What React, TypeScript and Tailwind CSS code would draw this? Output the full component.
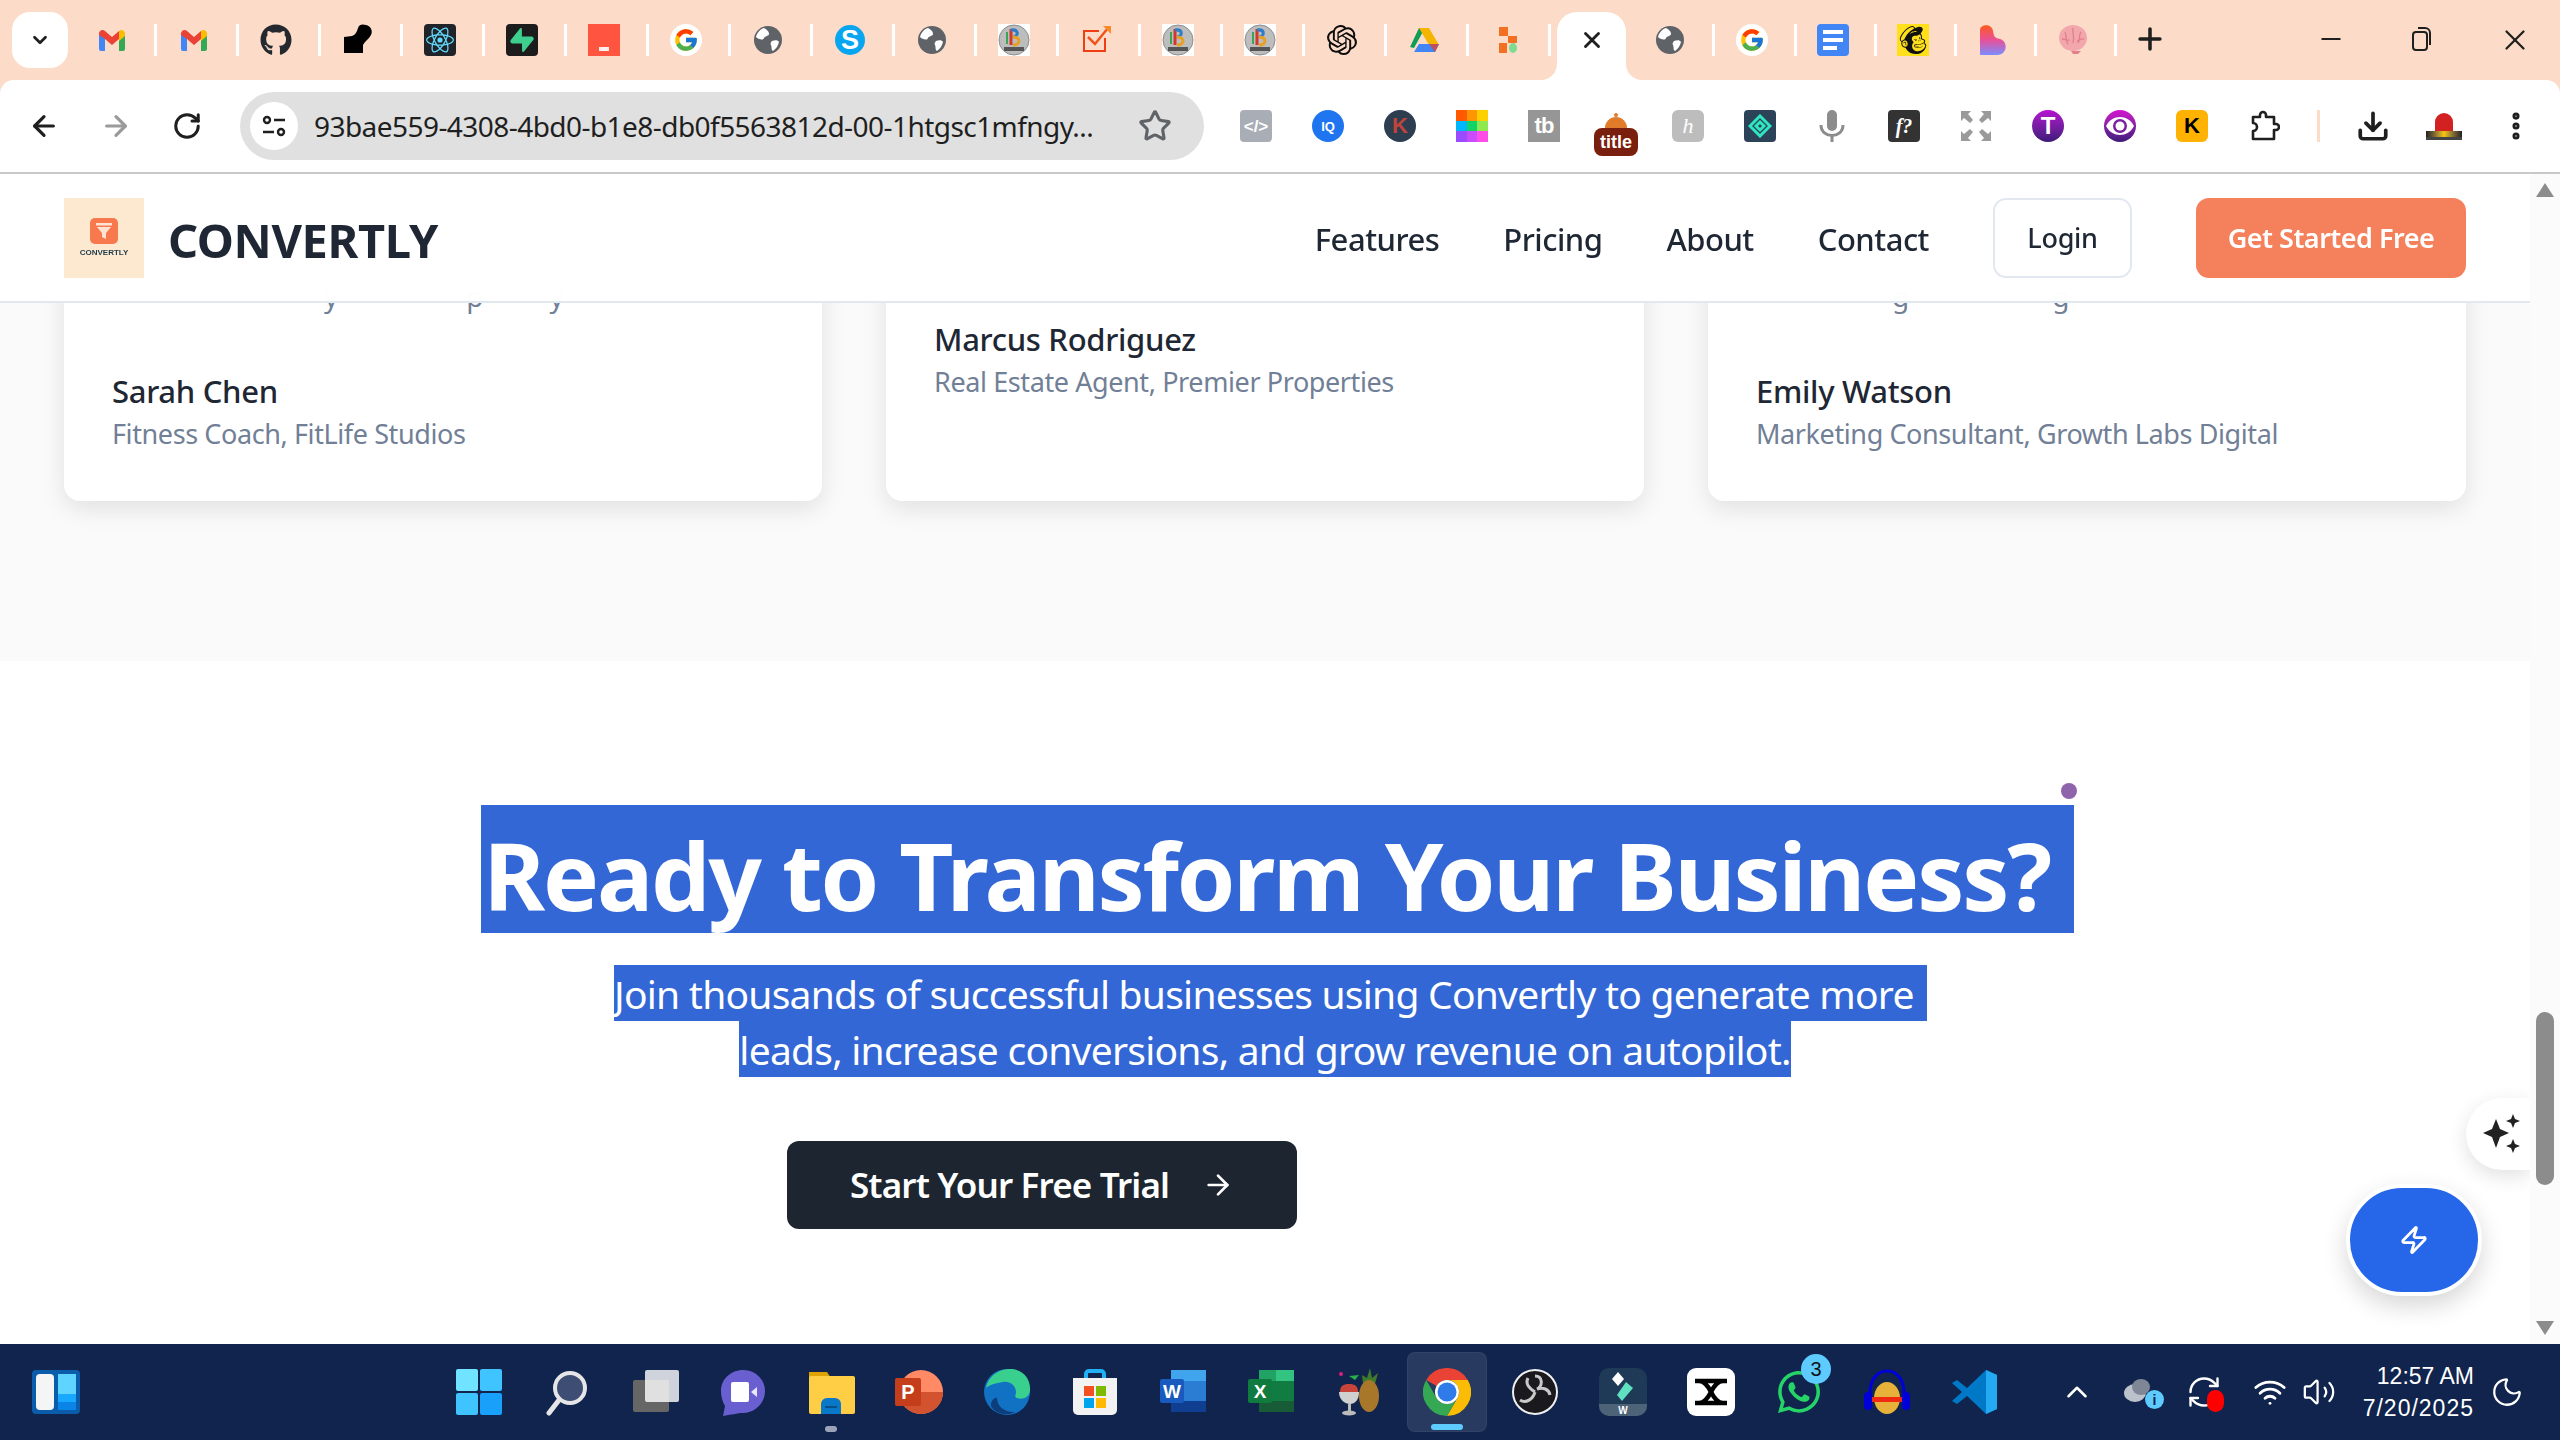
import type { ReactNode } from 'react';
import { ArrowLeft, ArrowRight, RotateCw, RefreshCw, Star, Download, MoreVertical, Plus, Minus, X, ChevronDown, ChevronUp, Zap, Wifi, Volume2, Moon } from 'lucide-react';
import { FaGithub, FaWhatsapp } from 'react-icons/fa';
import { FcGoogle } from 'react-icons/fc';
import { SiReact, SiSupabase, SiOpenai, SiMailchimp } from 'react-icons/si';

function Svg({ children, size = 32 }: { children: ReactNode; size?: number }) {
  return (
    <svg width={size} height={size} viewBox="0 0 32 32">
      {children}
    </svg>
  );
}

const Gmail = () => (
  <Svg>
    <path fill="#4285f4" d="M3 9h6v18H5a2 2 0 0 1-2-2z" />
    <path fill="#34a853" d="M23 9h6v16a2 2 0 0 1-2 2h-4z" />
    <path fill="#ea4335" d="M3 10c0-4 4-5 6-3l7 6 7-6v8l-7 6-7-6-6-4z" />
    <path fill="#fbbc04" d="M23 7c2-2 6-1 6 3v2l-6 5z" />
  </Svg>
);
const GoogleG = () => (
  <div className="w-8 h-8 rounded-full bg-white flex items-center justify-center">
    <FcGoogle size={26} />
  </div>
);
const Globe = () => (
  <Svg>
    <circle cx="16" cy="16" r="14" fill="#5f6368" />
    <path fill="#fff" d="M12 4c3 2 5 3 5 6 0 2-4 2-5 4-1 3-6 1-8-1 1-4 4-8 8-9zM20 17c3-1 6-1 7 1-1 4-3 7-6 9-2-1-1-4-2-6-1-1 0-3 1-4z" />
  </Svg>
);
const BadgeB = () => (
  <div className="w-8 h-8 bg-white flex items-center justify-center">
    <svg width="32" height="32" viewBox="0 0 32 32">
      <circle cx="16" cy="16" r="15" fill="#bdbdbd" stroke="#8d8d8d" />
      <path fill="none" stroke="#d4372c" strokeWidth="3" d="M13 5v16" />
      <path fill="none" stroke="#2d7dc9" strokeWidth="3" d="M13 6c8-1 8 6 2 7" />
      <path fill="none" stroke="#e8a020" strokeWidth="3" d="M15 13c8 0 8 8 0 8" />
      <path fill="none" stroke="#3aa655" strokeWidth="2" d="M9 8v12" />
      <rect x="6" y="23" width="20" height="4" fill="#555" />
    </svg>
  </div>
);

const Skype = () => (
  <Svg>
    <circle cx="16" cy="16" r="15" fill="#08a6f0" />
    <text x="16" y="25" textAnchor="middle" fontSize="27" fontWeight="700" fill="#fff" fontFamily="Liberation Sans">S</text>
  </Svg>
);
const Tick = () => (
  <Svg>
    <path fill="none" stroke="#ef3e12" strokeWidth="2" d="M25 14v13H4V7h15" />
    <path fill="none" stroke="#f2521c" strokeWidth="2.5" d="M8 13l7 7L28 4" />
    <path fill="#f98b2a" d="M23 2h8v8z" />
  </Svg>
);
const Drive = () => (
  <Svg>
    <path fill="#0f9d58" d="M11 4h6L6 24l-4-1z" />
    <path fill="#f4b400" d="M11 4h10l10 17H21z" />
    <path fill="#4285f4" d="M6 28l5-8h20l-4 8z" />
    <path fill="#db4437" d="M27 28l-6-8h10z" opacity="0.8" />
  </Svg>
);

const tabIcons: ReactNode[] = [
  <Gmail />,
  <Gmail />,
  <FaGithub size={32} color="#24292f" />,
  <Svg>
    <path d="M2 13l8-1c3-1 5-4 6-8 1-4 5-4 8-3 5 1 7 6 5 10-2 4-6 6-8 10v8H2z" />
  </Svg>,
  <div className="w-8 h-8 rounded bg-[#20232a] flex items-center justify-center"><SiReact size={28} color="#61dafb" /></div>,
  <div className="w-8 h-8 rounded bg-[#1c1c1c] flex items-center justify-center"><SiSupabase size={24} color="#3ecf8e" /></div>,
  <div className="w-8 h-8 bg-[#ff5540] flex items-end justify-center pb-[5px]"><div className="w-[10px] h-[4px] bg-white/90" /></div>,
  <GoogleG />,
  <Globe />,
  <Skype />,
  <Globe />,
  <BadgeB />,
  <Tick />,
  <BadgeB />,
  <BadgeB />,
  <SiOpenai size={30} color="#0d0d0d" />,
  <Drive />,
  <Svg>
    <rect x="9" y="3" width="9" height="9" fill="#f36f21" />
    <rect x="18" y="12" width="9" height="7" fill="#f36f21" />
    <rect x="9" y="19" width="8" height="10" fill="#f36f21" />
    <ellipse cx="23" cy="24" rx="4" ry="5" fill="#7ddc8f" />
  </Svg>,
];

const Docs = () => (
  <div className="w-8 h-8 rounded bg-[#4285f4] flex flex-col justify-center gap-[4px] px-[6px]">
    <div className="h-[4px] bg-white" />
    <div className="h-[4px] bg-white" />
    <div className="h-[4px] w-[14px] bg-white" />
  </div>
);
const Bubble = () => (
  <svg width="32" height="32" viewBox="0 0 32 32">
    <defs>
      <linearGradient id="bubble" x1="0" y1="0" x2="0" y2="1">
        <stop offset="0" stopColor="#ff5a1f" />
        <stop offset="0.5" stopColor="#e8509a" />
        <stop offset="1" stopColor="#7c8cff" />
      </linearGradient>
    </defs>
    <path fill="url(#bubble)" d="M3 6c0-6 12-7 13 1 1 6 2 7 7 8 8 2 8 16-3 16H3z" />
  </svg>
);
const Brain = () => (
  <Svg>
    <ellipse cx="16" cy="14" rx="14" ry="13" fill="#f2a7ad" />
    <path fill="none" stroke="#e27f8a" strokeWidth="1.3" d="M8 8c2 4 0 8 3 12M16 4c-1 5 2 9 0 15M24 8c-3 4 0 7-3 11M5 15c4 0 6 2 8 1M27 15c-4-1-5 2-7 2" />
    <path fill="#e27f8a" d="M14 27h10l-3 3h-5z" />
  </Svg>
);
const Mailchimp = () => (
  <div className="w-8 h-8 bg-[#ffe01b] flex items-center justify-center"><SiMailchimp size={28} color="#111" /></div>
);

function Tab({ children, w = 'w-[82px]' }: { children: ReactNode; w?: string }) {
  return (
    <div className={`${w} h-8 shrink-0 flex items-center justify-center pr-[6px] border-r-[3px] border-white`}>
      {children}
    </div>
  );
}

function TabStrip() {
  return (
    <div className="h-20 shrink-0 bg-[#fcdcc9] flex items-start pt-3 pl-3 text-[#1f1f1f]">
      <div className="w-14 h-14 rounded-[18px] bg-white flex items-center justify-center mr-[7px]">
        <ChevronDown size={22} strokeWidth={3} />
      </div>
      <div className="flex items-center mt-3">
        {tabIcons.map((icon, i) => (
          <Tab key={i}>{icon}</Tab>
        ))}
      </div>
      <div className="relative w-[69px] h-[68px] ml-[6px] mr-[7px] shrink-0 bg-white rounded-t-[20px] flex items-start pt-[15px] justify-center">
        <svg className="absolute bottom-0 -left-4" width="16" height="16" viewBox="0 0 16 16"><path fill="#fff" d="M16 0v16H0A16 16 0 0 0 16 0z" /></svg>
        <svg className="absolute bottom-0 -right-4" width="16" height="16" viewBox="0 0 16 16"><path fill="#fff" d="M0 0v16h16A16 16 0 0 1 0 0z" /></svg>
        <X size={26} strokeWidth={2.6} />
      </div>
      <div className="flex items-center mt-3">
        <Tab><Globe /></Tab>
        <Tab><GoogleG /></Tab>
        <Tab w="w-[80px]"><Docs /></Tab>
        <Tab w="w-[80px]"><Mailchimp /></Tab>
        <Tab w="w-[80px]"><Bubble /></Tab>
        <Tab w="w-[80px]"><Brain /></Tab>
      </div>
      <div className="ml-[16px] mt-[10px]"><Plus size={34} strokeWidth={2.5} /></div>
      <div className="ml-[149px] mt-[12px]"><Minus size={30} strokeWidth={1.6} /></div>
      <div className="ml-[60px] mt-[12px]">
        <svg width="30" height="32" viewBox="0 0 30 32" fill="none" stroke="#1f1f1f" strokeWidth="2">
          <rect x="7" y="8" width="14" height="18" rx="3" />
          <path d="M12 4h7a5 5 0 0 1 5 5v12" />
        </svg>
      </div>
      <div className="ml-[62px] mt-[11px]"><X size={34} strokeWidth={1.6} /></div>
    </div>
  );
}

const Square = ({ bg, children, round = 'rounded' }: { bg: string; children?: ReactNode; round?: string }) => (
  <div className={`w-8 h-8 ${round} ${bg} flex items-center justify-center text-white font-bold text-[17px] leading-none font-['Liberation_Sans',sans-serif]`}>
    {children}
  </div>
);

const extensions: ReactNode[] = [
  <Square bg="bg-[#a9adb5]" round="rounded-sm">&lt;/&gt;</Square>,
  <Square bg="bg-[#1f75f0]" round="rounded-full"><span className="text-[13px] text-white">IQ</span></Square>,
  <Square bg="bg-[#2c3e50]" round="rounded-full"><span className="text-[#c0443c] text-[22px]">K</span></Square>,
  <div className="w-8 h-8 grid grid-cols-3 grid-rows-3">
    {['bg-[#ff5a00]', 'bg-[#ff9500]', 'bg-[#ffd000]', 'bg-[#00b7ff]', 'bg-[#12d36a]', 'bg-[#8ee84f]', 'bg-[#9a4dff]', 'bg-[#c94dff]', 'bg-[#ff4de8]'].map((c) => (
      <div key={c} className={c} />
    ))}
  </div>,
  <Square bg="bg-[#969696]" round="rounded-none"><span className="text-[22px] tracking-[-1px]">tb</span></Square>,
  <div className="flex flex-col items-center mt-[16px]">
    <svg width="30" height="16" viewBox="0 0 30 16"><circle cx="15" cy="2" r="2" fill="#e07b2a" /><path fill="#e07b2a" d="M4 15a11 11 0 0 1 22 0z" /></svg>
    <div className="w-11 h-7 -mt-[1px] rounded-lg bg-[#7a1f0d] flex items-center justify-center text-white font-bold text-[18px] leading-none font-['Liberation_Sans',sans-serif]">title</div>
  </div>,
  <Square bg="bg-[#bdbdbd]" round="rounded-md"><span className="italic font-normal text-[22px] font-['Liberation_Serif',serif]">h</span></Square>,
  <Square bg="bg-[#2c4258]" round="rounded">
    <svg width="24" height="24" viewBox="0 0 24 24" fill="none" stroke="#2ee6c0" strokeWidth="3"><path d="M12 2l10 10-10 10L2 12zM12 8l4 4-4 4-4-4z" /></svg>
  </Square>,
  <svg width="32" height="32" viewBox="0 0 32 32" fill="none"><rect x="11" y="0" width="10" height="21" rx="5" fill="#8c8c8c" /><path d="M5 15c0 14 22 14 22 0M16 25v7" stroke="#8c8c8c" strokeWidth="3" /></svg>,
  <Square bg="bg-[#333333]" round="rounded"><span className="italic text-[20px] font-['Liberation_Serif',serif]">f?</span></Square>,
  <svg width="32" height="32" viewBox="0 0 32 32" fill="#9a9a9a"><path d="M1 1h10L8 4l5 6-3 3-6-5-3 3zM31 1v10l-3-3-6 5-3-3 5-6-3-3zM1 31V21l3 3 6-5 3 3-5 6 3 3zM31 31H21l3-3-5-6 3-3 6 5 3-3z" /></svg>,
  <Square bg="bg-gradient-to-b from-[#b60fd0] to-[#3f1a7a]" round="rounded-full"><span className="text-[24px]">T</span></Square>,
  <Square bg="bg-gradient-to-b from-[#d40fd0] to-[#3f1a7a]" round="rounded-full">
    <svg width="28" height="20" viewBox="0 0 28 20"><path fill="#fff" d="M0 10c6-12 22-12 28 0-6 12-22 12-28 0z" /><circle cx="14" cy="10" r="7" fill="#7b1fa2" /><circle cx="14" cy="10" r="4.5" fill="#fff" /></svg>
  </Square>,
  <Square bg="bg-[#ffb300]" round="rounded-md"><span className="text-black text-[22px]">K</span></Square>,
  <svg width="32" height="32" viewBox="0 0 32 32" fill="none" stroke="#1f1f1f" strokeWidth="2.6" strokeLinejoin="round"><path d="M5 7h7V5a3 3 0 0 1 6 0v2h8v7h2a3 3 0 0 1 0 6h-2v9H5v-8a4 4 0 0 0 0-8z" /></svg>,
];

function Toolbar() {
  return (
    <div className="h-[94px] shrink-0 bg-[#fcdcc9]">
      <div className="h-[94px] bg-white rounded-t-[14px] border-b-2 border-[#c8c8c8] flex items-center text-[#1f1f1f]">
        <div className="w-[240px] shrink-0 flex items-center pl-[28px] gap-10">
          <ArrowLeft size={32} strokeWidth={2.4} />
          <ArrowRight size={32} strokeWidth={2.4} color="#9a9a9a" />
          <RotateCw size={30} strokeWidth={2.4} />
        </div>
        <div className="w-[964px] h-[68px] shrink-0 rounded-full bg-[#e0e0e0] flex items-center pl-[10px]">
          <div className="w-12 h-12 rounded-full bg-white flex items-center justify-center">
            <svg width="26" height="26" viewBox="0 0 26 26" fill="none" stroke="#1f1f1f" strokeWidth="2.4">
              <circle cx="6" cy="7" r="3" />
              <path d="M13 7h11M2 19h11" />
              <circle cx="20" cy="19" r="3" />
            </svg>
          </div>
          <span className="ml-4 text-[28px] leading-none tracking-[-0.55px] text-[#1f1f1f] whitespace-nowrap">93bae559-4308-4bd0-b1e8-db0f5563812d-00-1htgsc1mfngy...</span>
          <div className="ml-auto mr-8"><Star size={34} strokeWidth={2.2} color="#5f6368" /></div>
        </div>
        <div className="flex items-center ml-[16px]">
          {extensions.map((icon, i) => (
            <div key={i} className="w-[72px] h-8 shrink-0 flex items-center justify-center">{icon}</div>
          ))}
        </div>
        <div className="w-[3px] h-8 bg-[#fcdcc9] ml-[17px] mr-[36px]" />
        <Download size={34} strokeWidth={2.6} />
        <div className="ml-[36px] w-[36px] flex flex-col items-center">
          <div className="w-[18px] h-[18px] rounded-t-full bg-[#d32020]" />
          <div className="w-[36px] h-[6px] bg-gradient-to-r from-[#222] via-[#f7c600] to-[#222]" />
          <div className="w-[36px] h-[3px] bg-[#444]" />
        </div>
        <div className="ml-[37px]"><MoreVertical size={34} strokeWidth={3} /></div>
      </div>
    </div>
  );
}

function Logo() {
  return (
    <div className="w-20 h-20 bg-[#fde9cf] flex flex-col items-center pt-5">
      <div className="w-7 h-[26px] rounded-[5px] bg-[#f9794f] flex items-center justify-center">
        <svg width="18" height="18" viewBox="0 0 18 18" fill="#fde4d2"><rect x="1" y="1" width="16" height="2.5" /><path d="M2 5h14l-5 6v6l-4-2v-4z" /></svg>
      </div>
      <span className="mt-[3px] text-[8px] leading-[12px] font-bold text-[#1f3a4a] font-['Liberation_Sans',sans-serif]">CONVERTLY</span>
    </div>
  );
}

function Nav() {
  return (
    <nav className="relative z-10 h-[129px] shrink-0 bg-white/95 backdrop-blur-md border-b-2 border-[#e2e8f0] flex items-center pl-16 pr-16 text-[#1e2733]">
      <Logo />
      <span className="ml-[24px] pt-[5px] text-[47px] leading-none font-bold tracking-[-0.4px]">CONVERTLY</span>
      <div className="ml-auto pt-[3px] flex items-center gap-[64px] text-[31px] font-medium tracking-[-0.5px]">
        <span>Features</span>
        <span>Pricing</span>
        <span>About</span>
        <span>Contact</span>
      </div>
      <div className="ml-[64px] w-[139px] h-20 pt-[2px] rounded-[13px] border-2 border-[#e2e8f0] bg-white flex items-center justify-center text-[27px] font-medium tracking-[-0.3px]">Login</div>
      <div className="ml-[64px] w-[270px] h-20 pt-[2px] rounded-[13px] bg-[#f4805c] flex items-center justify-center text-[27px] font-semibold tracking-[-0.5px] text-white">Get Started Free</div>
    </nav>
  );
}

function Testimonial({ name, role, tail, extra = '' }: { name: string; role: string; tail: ReactNode; extra?: string }) {
  return (
    <div className="h-[298px] bg-white rounded-2xl shadow-[0_8px_24px_rgba(0,0,0,0.1)] px-12 pb-12 flex flex-col justify-end">
      {tail}
      <div className={extra}>
        <div className="text-[31px] leading-[44px] font-medium tracking-[-0.3px] text-[#1e2733]">{name}</div>
        <div className="mt-[2px] text-[27px] leading-[38px] tracking-[-0.4px] text-[#718096]">{role}</div>
      </div>
    </div>
  );
}

function Testimonials() {
  return (
    <section className="-mt-[100px] bg-[#fafafa] shrink-0 pb-[160px]">
      <div className="grid grid-cols-3 gap-16 px-16">
        <Testimonial
          name="Sarah Chen"
          role="Fitness Coach, FitLife Studios"
          tail={
            <div className="flex h-[93px] text-[28px] leading-[40px] text-[#718096]">
              <span className="ml-[212px]">y</span>
              <span className="ml-[128px]">p</span>
              <span className="ml-[66px]">y</span>
            </div>
          }
        />
        <Testimonial
          name="Marcus Rodriguez"
          role="Real Estate Agent, Premier Properties"
          extra="mb-[52px]"
          tail={null}
        />
        <Testimonial
          name="Emily Watson"
          role="Marketing Consultant, Growth Labs Digital"
          tail={
            <div className="flex h-[93px] text-[28px] leading-[40px] text-[#718096]">
              <span className="ml-[136px]">g</span>
              <span className="ml-[143px]">g</span>
            </div>
          }
        />
      </div>
    </section>
  );
}

function Cta() {
  return (
    <section className="relative flex-1 bg-white pt-[144px]">
      <div className="absolute left-[2061px] top-[122px] w-4 h-4 rounded-full bg-[#8e64aa]" />
      <div className="flex justify-center">
        <h1 className="w-[1593px] -mr-[24px] shrink-0 h-32 pl-[3px] bg-[#3367d6] text-white text-[94px] leading-[140px] tracking-[-2.2px] font-bold whitespace-nowrap">Ready to Transform Your Business?</h1>
      </div>
      <div className="mt-8 text-[39px] tracking-[-0.75px] text-white">
        <div className="flex justify-center">
          <span className="w-[1313px] -mr-[11px] shrink-0 h-14 bg-[#3367d6] leading-[58px] whitespace-nowrap">Join thousands of successful businesses using Convertly to generate more</span>
        </div>
        <div className="flex justify-center">
          <span className="h-14 bg-[#3367d6] leading-[58px] whitespace-nowrap">leads, increase conversions, and grow revenue on autopilot.</span>
        </div>
      </div>
      {/* second hero button is white on white in the shot, so only the first one shows */}
      <div className="mt-16 flex pl-[787px]">
        <div className="w-[510px] h-[88px] rounded-xl bg-[#1d2630] flex items-center justify-center gap-[33px] text-white text-[35px] font-semibold tracking-[-0.85px]">
          <span>Start Your Free Trial</span>
          <ArrowRight size={32} strokeWidth={2} />
        </div>
      </div>
      <div className="absolute right-0 top-[437px] w-16 h-[72px] pl-2 rounded-l-full bg-white shadow-[0_6px_20px_rgba(0,0,0,0.12)] flex items-center justify-center">
        <svg width="40" height="40" viewBox="0 0 40 40" fill="#222"><path d="M14 5l4 10 9 4-9 4-4 11-4-11-9-4 9-4zM31 0l2 5 5 2-5 2-2 5-2-5-5-2 5-2zM31 25l2 5 5 2-5 2-2 5-2-5-5-2 5-2z" /></svg>
      </div>
      <div className="absolute right-[48px] top-[523px] w-[136px] h-[112px] rounded-full bg-[#2667ea] border-4 border-white shadow-[0_10px_24px_rgba(0,0,0,0.16)] flex items-center justify-center">
        <Zap size={30} strokeWidth={2.2} color="#fff" />
      </div>
    </section>
  );
}

function Scrollbar() {
  return (
    <div className="w-[30px] shrink-0 bg-[#fbfbfb] flex flex-col items-center pt-[9px] pb-[9px]">
      <svg width="18" height="14" viewBox="0 0 18 14" fill="#8c8c8c"><path d="M9 0l9 14H0z" /></svg>
      <div className="mt-[815px] w-[18px] h-[173px] rounded-full bg-[#8c8c8c]" />
      <svg className="mt-auto" width="18" height="14" viewBox="0 0 18 14" fill="#8c8c8c"><path d="M9 14L0 0h18z" /></svg>
    </div>
  );
}

const taskIcons: ReactNode[] = [
  <svg width="48" height="48" viewBox="0 0 48 48"><rect x="1" y="1" width="22" height="22" rx="2" fill="#6fe3ff" /><rect x="25" y="1" width="22" height="22" rx="2" fill="#40c4ff" /><rect x="1" y="25" width="22" height="22" rx="2" fill="#40c4ff" /><rect x="25" y="25" width="22" height="22" rx="2" fill="#18a0fb" /></svg>,
  <svg width="48" height="48" viewBox="0 0 48 48" fill="none"><circle cx="27" cy="20" r="15" fill="#3e4d74" stroke="#e6e6e6" strokeWidth="4" /><path d="M16 32L6 45" stroke="#e6e6e6" strokeWidth="5" strokeLinecap="round" /></svg>,
  <svg width="48" height="48" viewBox="0 0 48 48"><rect x="2" y="12" width="36" height="32" rx="2" fill="#666" /><rect x="14" y="2" width="34" height="32" rx="2" fill="#fff" opacity="0.8" /></svg>,
  <svg width="48" height="48" viewBox="0 0 48 48"><path fill="#6a5fd0" d="M24 2c12 0 22 9 22 21s-10 22-22 22c-5 0-13 2-20 3l2-10C3 33 2 28 2 23 2 11 12 2 24 2z" /><rect x="12" y="14" width="18" height="20" rx="2" fill="#fff" /><path fill="#e8e8f8" d="M32 24l6-5v10z" /></svg>,
  <svg width="48" height="48" viewBox="0 0 48 48"><path fill="#e0a200" d="M2 4h18l4 6v4H2z" /><rect x="2" y="8" width="46" height="38" rx="2" fill="#ffce44" /><path fill="#0a78c9" d="M14 46V36a6 6 0 0 1 6-6h8a6 6 0 0 1 6 6v10z" /><rect x="18" y="38" width="12" height="2" fill="#0a4f8a" /></svg>,
  <svg width="48" height="48" viewBox="0 0 48 48"><circle cx="26" cy="24" r="22" fill="#ff8a65" /><path fill="#d35230" d="M26 24h22a22 22 0 0 1-44 0z" /><rect x="0" y="10" width="26" height="28" rx="2" fill="#c43e1c" /><text x="13" y="31" textAnchor="middle" fontSize="20" fontWeight="700" fill="#fff" fontFamily="Liberation Sans">P</text></svg>,
  <svg width="48" height="48" viewBox="0 0 48 48"><circle cx="24" cy="24" r="23" fill="#1172c4" /><path fill="#39d08f" d="M3 20C6 6 18 1 27 1c13 0 21 10 20 22-1 7-8 9-13 7-3-1-1-3-1-6 0-7-7-11-13-10C13 15 6 17 3 20z" /><path fill="#0d3d7a" d="M14 30c0 9 9 15 18 14-7 4-19 3-24-6-1-3 3-10 6-8z" /></svg>,
  <svg width="48" height="48" viewBox="0 0 48 48"><path fill="none" stroke="#20b0f5" strokeWidth="4" d="M15 12V6a3 3 0 0 1 3-3h12a3 3 0 0 1 3 3v6" /><path fill="#f2f2f2" d="M2 10h44v32a5 5 0 0 1-5 5H7a5 5 0 0 1-5-5z" /><rect x="13" y="18" width="10" height="10" fill="#f25022" /><rect x="25" y="18" width="10" height="10" fill="#7fba00" /><rect x="13" y="30" width="10" height="10" fill="#00a4ef" /><rect x="25" y="30" width="10" height="10" fill="#ffb900" /></svg>,
  <svg width="48" height="48" viewBox="0 0 48 48"><rect x="12" y="2" width="35" height="42" rx="2" fill="#2b7cd3" /><rect x="12" y="2" width="35" height="11" fill="#41a5ee" /><rect x="12" y="33" width="35" height="11" fill="#103f91" /><rect x="1" y="11" width="24" height="24" rx="2" fill="#185abd" /><text x="13" y="30" textAnchor="middle" fontSize="19" fontWeight="700" fill="#fff" fontFamily="Liberation Sans">W</text></svg>,
  <svg width="48" height="48" viewBox="0 0 48 48"><rect x="12" y="2" width="35" height="42" rx="2" fill="#107c41" /><rect x="29" y="2" width="18" height="11" fill="#33c481" /><rect x="12" y="2" width="17" height="11" fill="#21a366" /><rect x="12" y="33" width="35" height="11" fill="#185c37" /><rect x="1" y="11" width="24" height="24" rx="2" fill="#0f7b3f" /><text x="13" y="30" textAnchor="middle" fontSize="19" fontWeight="700" fill="#fff" fontFamily="Liberation Sans">X</text></svg>,
  <svg width="48" height="48" viewBox="0 0 48 48"><path fill="#3f7a2c" d="M35 0l2 10 6-5-3 11H28l-1-9 5 3z" /><ellipse cx="34" cy="28" rx="10" ry="16" fill="#a9772a" /><path fill="#d0d0d0" d="M4 24h20c0 8-4 12-9 12S4 32 4 24z" /><path fill="#c8443a" d="M5 24h18c0-6-3-8-9-8s-9 2-9 8z" /><rect x="13" y="36" width="3" height="8" fill="#bbb" /><ellipse cx="14" cy="45" rx="7" ry="2.5" fill="#bbb" /><circle cx="6" cy="6" r="2" fill="#e01b84" /><path fill="#25b04a" d="M14 8l10-1-4 5z" /></svg>,
  <svg width="48" height="48" viewBox="0 0 48 48"><path fill="#ea4335" d="M3.2 12A24 24 0 0 1 44.8 12H24A12 12 0 0 0 13.6 18z" /><path fill="#fbbc04" d="M44.8 12A24 24 0 0 1 24 48L34.4 30A12 12 0 0 0 24 12z" /><path fill="#34a853" d="M24 48A24 24 0 0 1 3.2 12L13.6 30A12 12 0 0 0 34.4 30z" /><circle cx="24" cy="24" r="12" fill="#fff" /><circle cx="24" cy="24" r="9.5" fill="#2f7bea" /></svg>,
  <svg width="48" height="48" viewBox="0 0 48 48"><circle cx="24" cy="24" r="22" fill="#1a1a1e" stroke="#f0f0f0" strokeWidth="2" /><path fill="none" stroke="#c8c8c8" strokeWidth="3" d="M24 8c8 0 8 10 2 13 6-2 12 0 13 6M24 24c-2 7-9 12-15 8M24 24C18 20 14 16 17 10" /></svg>,
  <svg width="48" height="48" viewBox="0 0 48 48"><rect width="48" height="48" rx="10" fill="#1e3a56" /><path fill="#4d6478" d="M0 36h48v2a10 10 0 0 1-10 10H10A10 10 0 0 1 0 38z" /><path fill="#fff" d="M19 4l6 7-6 7-6-7z" /><path fill="#5fe0c0" d="M27 14l7 6-11 13-5-6z" /><text x="24" y="46" textAnchor="middle" fontSize="10" fontWeight="700" fill="#fff" fontFamily="Liberation Sans">W</text></svg>,
  <svg width="48" height="48" viewBox="0 0 48 48"><rect width="48" height="48" rx="9" fill="#fff" /><path fill="none" stroke="#000" strokeWidth="4.5" strokeLinejoin="round" d="M8 13h32M8 35h32M12 13c6 0 10 7 12 11 2 4 6 11 12 11M36 13c-6 0-10 7-12 11-2 4-6 11-12 11" /></svg>,
  <FaWhatsapp size={48} color="#25d366" />,
  <svg width="48" height="48" viewBox="0 0 48 48"><path fill="none" stroke="#0000d8" strokeWidth="3" d="M7 28C6 12 14 3 24 3s18 9 17 25" /><rect x="1" y="24" width="8" height="18" rx="4" fill="#0000d8" /><rect x="39" y="24" width="8" height="18" rx="4" fill="#0000d8" /><ellipse cx="24" cy="30" rx="13" ry="16" fill="#e8b23a" /><path fill="#ef2a10" d="M9 29h30v5H9z" /></svg>,
  <svg width="48" height="48" viewBox="0 0 48 48"><path fill="#0078c8" d="M35 2L16 20 6 12l-5 3 10 9L1 33l5 3 10-8 19 18 11-5V7z" /><path fill="#25a9f2" d="M35 2l11 5v34l-11 5z" /></svg>,
];

function Taskbar() {
  return (
    <div className="h-24 shrink-0 bg-[#10244d] flex items-center text-white">
      <div className="ml-8 w-12 h-11 bg-[#0b5cab] flex gap-[4px] p-1 rounded-sm">
        <div className="w-[18px] bg-[#f5f5f5] rounded-sm" />
        <div className="flex-1 flex flex-col">
          <div className="flex-1 bg-[#5fd4ff]" />
          <div className="h-[8px] bg-[#19a8ff]" />
          <div className="h-[8px] bg-[#0a84e6]" />
        </div>
      </div>
      <div className="ml-[355px] flex items-center">
        {taskIcons.map((icon, i) => (
          <div key={i} className="relative w-[88px] h-20 flex items-center justify-center">
            {i === 11 && <div className="absolute inset-y-0 left-1 right-1 rounded-lg bg-white/10 border border-white/5" />}
            <div className="relative flex">{icon}</div>
            {i === 4 && <div className="absolute bottom-0 left-[38px] w-3 h-[6px] rounded-full bg-[#9aa3b8]" />}
            {i === 11 && <div className="absolute bottom-[2px] left-[28px] w-8 h-[6px] rounded-full bg-[#5ecbff]" />}
            {i === 15 && <div className="absolute top-[2px] left-[46px] w-[30px] h-[30px] rounded-full bg-[#5ecbff] flex items-center justify-center text-[20px] leading-none text-[#111] font-['Liberation_Sans',sans-serif]">3</div>}
          </div>
        ))}
      </div>
      <div className="ml-[41px]"><ChevronUp size={34} strokeWidth={1.8} /></div>
      <div className="ml-[30px] relative w-[32px] h-[30px]">
        <svg width="32" height="30" viewBox="0 0 32 30"><ellipse cx="11" cy="16" rx="11" ry="9" fill="#bcc2cc" /><ellipse cx="17" cy="10" rx="9" ry="8" fill="#7f8796" /></svg>
        <div className="absolute -right-2 bottom-[-2px] w-[19px] h-[19px] rounded-full bg-[#5ecbff] flex items-center justify-center text-[14px] font-bold leading-none text-[#10244d] font-['Liberation_Sans',sans-serif]">i</div>
      </div>
      <div className="ml-[30px] relative">
        <RefreshCw size={36} strokeWidth={1.6} />
        <div className="absolute right-[-2px] bottom-[-2px] w-[17px] h-[22px] rounded-full bg-[#ff0000]" />
      </div>
      <div className="ml-[31px]"><Wifi size={34} strokeWidth={2} /></div>
      <div className="ml-[15px]"><Volume2 size={34} strokeWidth={1.6} /></div>
      <div className="ml-[18px] w-[120px] text-right text-[23px] leading-[32px] font-['Liberation_Sans',sans-serif] whitespace-nowrap">
        <div>12:57 AM</div>
        <div className="tracking-[1px]">7/20/2025</div>
      </div>
      <div className="ml-[16px]"><Moon size={34} strokeWidth={1.6} /></div>
    </div>
  );
}

export default function App() {
  return (
    <div className="w-[2560px] h-[1440px] overflow-hidden flex flex-col bg-white font-['Noto_Sans','Liberation_Sans',sans-serif]">
      <TabStrip />
      <Toolbar />
      <div className="flex-1 min-h-0 flex">
        <div className="w-[2530px] flex flex-col min-h-0 overflow-hidden">
          <Nav />
          <Testimonials />
          <Cta />
        </div>
        <Scrollbar />
      </div>
      <Taskbar />
    </div>
  );
}
